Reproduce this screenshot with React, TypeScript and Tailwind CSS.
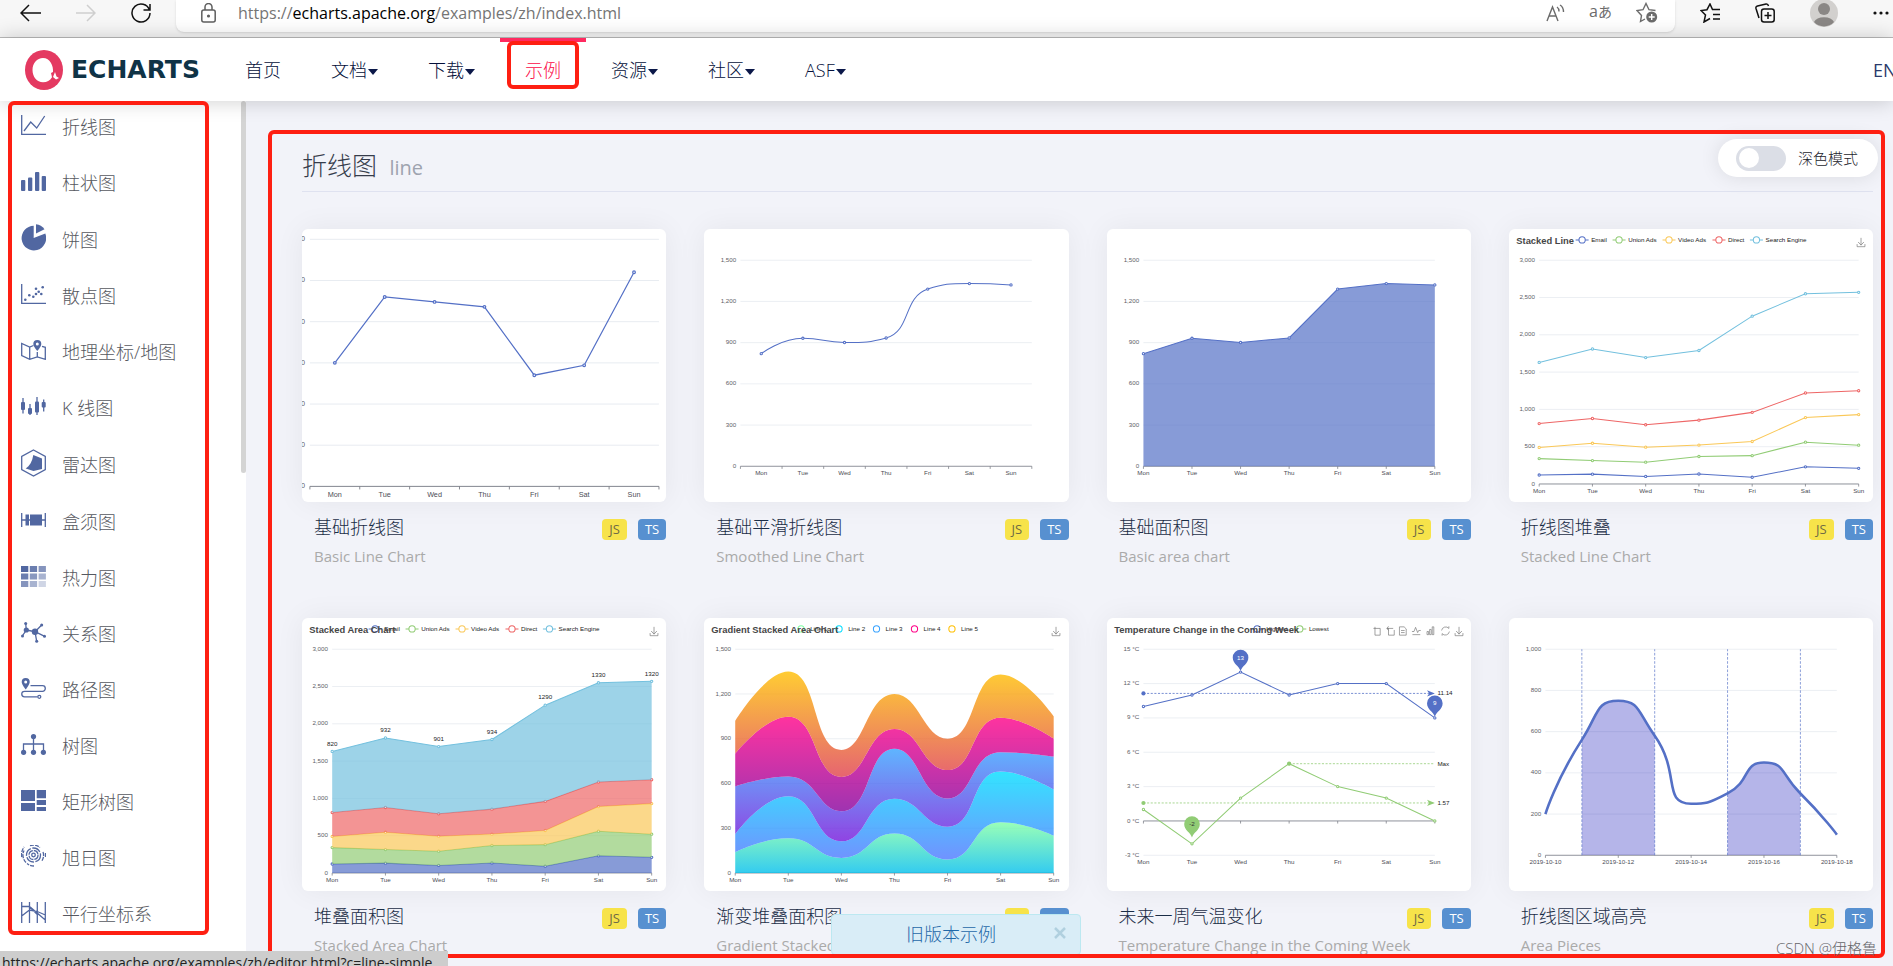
import type { ReactNode } from "react";

const DAYS = ["Mon", "Tue", "Wed", "Thu", "Fri", "Sat", "Sun"];

type Pt = [number, number];
type Box = { l: number; r: number; t: number; b: number };

const CENTER: Box = { l: 70, r: 630, t: 60, b: 456 };
const WIDE: Box = { l: 58, r: 672, t: 60, b: 490 };

const poly = (pts: Pt[]) => "M" + pts.map((p) => p.join(" ")).join("L");

const clamp = (v: number, a: number, b: number) => Math.max(Math.min(v, Math.max(a, b)), Math.min(a, b));

// Bezier smoothing: control points never leave the box between two neighbours.
function smoothPath(pts: Pt[], smooth = 0.5) {
  let d = `M${pts[0][0]} ${pts[0][1]}`;
  let [c0x, c0y] = pts[0];
  for (let i = 1; i < pts.length; i++) {
    const [px, py] = pts[i - 1];
    const [x, y] = pts[i];
    let c1x = x;
    let c1y = y;
    let n0x = x;
    let n0y = y;
    if (i < pts.length - 1) {
      const [nx, ny] = pts[i + 1];
      const prev = Math.hypot(x - px, y - py);
      const next = Math.hypot(nx - x, ny - y);
      const ratio = next / (next + prev);
      n0x = clamp(x + (nx - px) * smooth * ratio, x, nx);
      n0y = clamp(y + (ny - py) * smooth * ratio, y, ny);
      c1x = clamp(x - ((n0x - x) * prev) / next, px, x);
      c1y = clamp(y - ((n0y - y) * prev) / next, py, y);
      n0x = x + ((x - c1x) * next) / prev;
      n0y = y + ((y - c1y) * next) / prev;
    }
    d += `C${c0x} ${c0y} ${c1x} ${c1y} ${x} ${y}`;
    c0x = n0x;
    c0y = n0y;
  }
  return d;
}

const place = (values: number[], box: Box, max: number, min = 0, band = false): Pt[] =>
  values.map((v, i) => {
    const w = box.r - box.l;
    const x = band ? box.l + (w / values.length) * (i + 0.5) : box.l + (w / (values.length - 1)) * i;
    return [x, box.b - ((v - min) / (max - min)) * (box.b - box.t)];
  });

function Svg({ w = 700, h = 525, label, children }: { w?: number; h?: number; label: string; children: ReactNode }) {
  return (
    <svg viewBox={`0 0 ${w} ${h}`} role="img" aria-label={label} className="block h-full w-full font-['Liberation_Sans',sans-serif]">
      {children}
    </svg>
  );
}

function YGrid({ box, labels, labelX }: { box: Box; labels: string[]; labelX?: number }) {
  const step = (box.b - box.t) / (labels.length - 1);
  return (
    <g>
      {labels.map((l, i) => (
        <g key={i}>
          <line x1={box.l} x2={box.r} y1={box.t + step * i} y2={box.t + step * i} stroke="#e6eaf0" strokeWidth="1.5" />
          <text x={labelX ?? box.l - 8} y={box.t + step * i + 3} textAnchor="end" fontSize="12" fill="#5c5e66">
            {l}
          </text>
        </g>
      ))}
    </g>
  );
}

function XAxis({ box, labels = DAYS, band = false, y }: { box: Box; labels?: string[]; band?: boolean; y?: number }) {
  const w = box.r - box.l;
  const ticks = band ? labels.length : labels.length - 1;
  const axisY = y ?? box.b;
  return (
    <g>
      <path
        d={`M${box.l} ${axisY}H${box.r}` + Array.from({ length: ticks + 1 }, (_, i) => `M${box.l + (w / ticks) * i} ${axisY}v5`).join("")}
        stroke="#7d7f87"
        strokeWidth="1.5"
        fill="none"
      />
      {labels.map((l, i) => (
        <text key={l} x={box.l + (w / ticks) * (band ? i + 0.5 : i)} y={box.b + 17} textAnchor="middle" fontSize="12" fill="#4c4e56">
          {l}
        </text>
      ))}
    </g>
  );
}

function Dots({ pts, color }: { pts: Pt[]; color: string }) {
  return (
    <g fill="#fff" stroke={color} strokeWidth="2">
      {pts.map(([x, y]) => (
        <circle key={x} cx={x} cy={y} r="2.2" />
      ))}
    </g>
  );
}

type LegendItem = { name: string; x: number; color: string };

function Legend({ items, line = true }: { items: LegendItem[]; line?: boolean }) {
  return (
    <g>
      {items.map(({ name, x, color }) => (
        <g key={name}>
          {line && <path d={`M${x} 21h25`} stroke={color} strokeWidth="2" />}
          <circle cx={x + 12.5} cy="21" r="6" fill="#fff" stroke={color} strokeWidth="2" />
          <text x={x + 30} y="25" fontSize="12" fill="#222">
            {name}
          </text>
        </g>
      ))}
    </g>
  );
}

const ChartTitle = ({ children }: { children: string }) => (
  <text x="14" y="28" fontSize="18" fontWeight="bold" fill="#464646">
    {children}
  </text>
);

const Download = () => (
  <path d="M669 29v5h15v-5M676.500 17v14M671 25l5.500 6 5.500-6" fill="none" stroke="#777" strokeWidth="1.300" />
);

function BasicLine() {
  const box = { l: 13, r: 588, t: 17, b: 424 };
  const pts = place([150, 230, 224, 218, 135, 147, 260], box, 300, 0, true);
  return (
    <Svg w={600} h={450} label="Basic Line Chart">
      <YGrid box={box} labels={["300", "250", "200", "150", "100", "50", "0"]} labelX={5} />
      <XAxis box={box} band />
      <path d={poly(pts)} fill="none" stroke="#5470c6" strokeWidth="2" />
      <Dots pts={pts} color="#5470c6" />
    </Svg>
  );
}

const WEEK = [820, 932, 901, 934, 1290, 1330, 1320];
const TICKS_1500 = ["1,500", "1,200", "900", "600", "300", "0"];
const TICKS_3000 = ["3,000", "2,500", "2,000", "1,500", "1,000", "500", "0"];

function SmoothLine() {
  const pts = place(WEEK, CENTER, 1500, 0, true);
  return (
    <Svg label="Smoothed Line Chart">
      <YGrid box={CENTER} labels={TICKS_1500} />
      <XAxis box={CENTER} band />
      <path d={smoothPath(pts)} fill="none" stroke="#5470c6" strokeWidth="2" />
      <Dots pts={pts} color="#5470c6" />
    </Svg>
  );
}

function BasicArea() {
  const pts = place(WEEK, CENTER, 1500);
  return (
    <Svg label="Basic area chart">
      <YGrid box={CENTER} labels={TICKS_1500} />
      <XAxis box={CENTER} />
      <path d={`${poly(pts)}V${CENTER.b}H${CENTER.l}Z`} fill="#5470c6" fillOpacity="0.7" />
      <path d={poly(pts)} fill="none" stroke="#5470c6" strokeWidth="2" />
      <Dots pts={pts} color="#5470c6" />
    </Svg>
  );
}

const STACK = [
  { name: "Email", x: 128, color: "#5470c6", data: [120, 132, 101, 134, 90, 230, 210] },
  { name: "Union Ads", x: 199, color: "#91cc75", data: [220, 182, 191, 234, 290, 330, 310] },
  { name: "Video Ads", x: 295, color: "#fac858", data: [150, 232, 201, 154, 190, 330, 410] },
  { name: "Direct", x: 391, color: "#ee6666", data: [320, 332, 301, 334, 390, 330, 320] },
  { name: "Search Engine", x: 463, color: "#73c0de", data: WEEK },
];

// Running totals, one row for each stacked series.
const stackUp = (rows: number[][]) =>
  rows.map((_, i) => rows[0].map((_, k) => rows.slice(0, i + 1).reduce((sum, r) => sum + r[k], 0)));

const areaBetween = (top: Pt[], bottom: Pt[]) => `${poly(top)}L${poly([...bottom].reverse()).slice(1)}Z`;

function StackedLine({ area = false }: { area?: boolean }) {
  const lines = stackUp(STACK.map((s) => s.data)).map((row) => place(row, WIDE, 3000));
  const floor = place(Array(7).fill(0), WIDE, 3000);
  return (
    <Svg label={area ? "Stacked Area Chart" : "Stacked Line Chart"}>
      <Legend items={STACK} />
      <ChartTitle>{area ? "Stacked Area Chart" : "Stacked Line"}</ChartTitle>
      <Download />
      <YGrid box={WIDE} labels={TICKS_3000} />
      <XAxis box={WIDE} />
      {lines.map((pts, i) => (
        <g key={STACK[i].name}>
          {area && <path d={areaBetween(pts, lines[i - 1] ?? floor)} fill={STACK[i].color} fillOpacity="0.7" />}
          <path d={poly(pts)} fill="none" stroke={STACK[i].color} strokeWidth="2" />
          <Dots pts={pts} color={STACK[i].color} />
        </g>
      ))}
      {area &&
        lines[4].map(([x, y], i) => (
          <text key={x} x={x} y={y - 11} textAnchor="middle" fontSize="12" fill="#222">
            {WEEK[i]}
          </text>
        ))}
    </Svg>
  );
}

const GRADIENT = [
  { name: "Line 1", x: 174, color: "#80ffa5", from: "rgb(128,255,165)", to: "rgb(1,191,236)", data: [140, 232, 101, 264, 90, 340, 250] },
  { name: "Line 2", x: 247, color: "#00ddff", from: "rgb(0,221,255)", to: "rgb(77,119,255)", data: [120, 282, 111, 234, 220, 340, 310] },
  { name: "Line 3", x: 319, color: "#37a2ff", from: "rgb(55,162,255)", to: "rgb(116,21,219)", data: [320, 132, 201, 334, 190, 130, 220] },
  { name: "Line 4", x: 392, color: "#ff0087", from: "rgb(255,0,135)", to: "rgb(135,0,157)", data: [220, 402, 231, 134, 190, 230, 120] },
  { name: "Line 5", x: 464, color: "#ffbf00", from: "rgb(255,191,0)", to: "rgb(224,62,76)", data: [220, 302, 181, 234, 210, 290, 150] },
];

function GradientArea() {
  const box = { ...WIDE, l: 60 };
  const lines = stackUp(GRADIENT.map((s) => s.data)).map((row) => place(row, box, 1500));
  const floor = place(Array(7).fill(0), box, 1500);
  return (
    <Svg label="Gradient Stacked Area Chart">
      <defs>
        {GRADIENT.map((s, i) => (
          <linearGradient key={s.name} id={`grad-${i}`} x1="0" y1="0" x2="0" y2="1">
            <stop offset="0" stopColor={s.from} />
            <stop offset="1" stopColor={s.to} />
          </linearGradient>
        ))}
      </defs>
      <Legend items={GRADIENT} line={false} />
      <ChartTitle>Gradient Stacked Area Chart</ChartTitle>
      <Download />
      <YGrid box={box} labels={TICKS_1500} />
      <XAxis box={box} />
      {lines.map((pts, i) => {
        const back = [...(lines[i - 1] ?? floor)].reverse();
        return (
          <path key={GRADIENT[i].name} d={`${smoothPath(pts)}L${smoothPath(back).slice(1)}Z`} fill={`url(#grad-${i})`} fillOpacity="0.8" />
        );
      })}
    </Svg>
  );
}

function Pin({ x, y, color, text, dark = false }: { x: number; y: number; color: string; text: string; dark?: boolean }) {
  return (
    <g>
      <path d={`M${x} ${y + 26}C${x - 3} ${y + 16} ${x - 15} ${y + 12} ${x - 15} ${y}a15 15 0 0 1 30 0C${x + 15} ${y + 12} ${x + 3} ${y + 16} ${x} ${y + 26}Z`} fill={color} />
      <text x={x} y={y + 4} textAnchor="middle" fontSize="12" fill={dark ? "#333" : "#fff"}>
        {text}
      </text>
    </g>
  );
}

function Temperature() {
  const box = CENTER;
  const high = place([10, 11, 13, 11, 12, 12, 9], box, 15, -3);
  const low = place([1, -2, 2, 5, 3, 2, 0], box, 15, -3);
  const [, avgHigh] = place([11.14, 0], box, 15, -3)[0];
  const [, avgLow] = place([1.57, 0], box, 15, -3)[0];
  const marks = [
    { y: avgHigh, x: box.l, color: "#5470c6", text: "11.14", arrow: true },
    { y: low[3][1], x: low[3][0], color: "#91cc75", text: "Max", arrow: false },
    { y: avgLow, x: box.l, color: "#91cc75", text: "1.57", arrow: true },
  ];
  return (
    <Svg label="Temperature Change in the Coming Week">
      <Legend
        items={[
          { name: "Highest", x: 276, color: "#5470c6" },
          { name: "Lowest", x: 358, color: "#91cc75" },
        ]}
      />
      <ChartTitle>Temperature Change in the Coming Week</ChartTitle>
      <g fill="none" stroke="#777" strokeWidth="1.300">
        <path d="M512 20h13v13h-10v-16" />
        <path d="M538 20h3v13h11v-10M538 20h12M541 16l-3 4 3 4" />
        <path d="M562 17h9l4 4v12h-13zM565 24h7M565 28h7" />
        <path d="M587 32h15M586 26h4l3-8 4 10 2-4h4" />
        <path d="M615 32v-6h3v6zM620 32v-10h3v10zM625 32v-15h3v15z" />
        <path d="M643 24a8 8 0 0 1 14-4v-4M658 26a8 8 0 0 1-14 4v4" />
      </g>
      <Download />
      <YGrid box={box} labels={["15 °C", "12 °C", "9 °C", "6 °C", "3 °C", "0 °C", "-3 °C"]} />
      <XAxis box={box} y={390} />
      <path d={poly(high)} fill="none" stroke="#5470c6" strokeWidth="2" />
      <path d={poly(low)} fill="none" stroke="#91cc75" strokeWidth="2" />
      <Dots pts={high} color="#5470c6" />
      <Dots pts={low} color="#91cc75" />
      {marks.map((m) => (
        <g key={m.text}>
          <circle cx={m.x} cy={m.y} r="4" fill={m.color} />
          <path d={`M${m.x} ${m.y}H${box.r}`} stroke={m.color} strokeWidth="1.500" strokeDasharray="4 3" />
          {m.arrow && <path d={`M${box.r} ${m.y}l-15-6 4 6-4 6z`} fill={m.color} />}
          <text x={box.r + 5} y={m.y + 4} fontSize="12" fill="#222">
            {m.text}
          </text>
        </g>
      ))}
      <Pin x={high[2][0]} y={76} color="#5470c6" text="13" />
      <Pin x={high[6][0]} y={164} color="#5470c6" text="9" />
      <Pin x={low[1][0]} y={396} color="#91cc75" text="-2" dark />
    </Svg>
  );
}

function AreaPieces() {
  const box = CENTER;
  const line = smoothPath(place([200, 560, 750, 580, 250, 300, 450, 300, 100], box, 1000), 0.6);
  return (
    <Svg label="Area Pieces">
      <clipPath id="pieces">
        <rect x="140" y="60" width="140" height="396" />
        <rect x="420" y="60" width="140" height="396" />
      </clipPath>
      <YGrid box={box} labels={["1,000", "800", "600", "400", "200", "0"]} />
      <XAxis box={box} labels={["2019-10-10", "2019-10-12", "2019-10-14", "2019-10-16", "2019-10-18"]} />
      <path d={`${line}V${box.b}H${box.l}Z`} fill="rgb(0,0,180)" fillOpacity="0.29" clipPath="url(#pieces)" />
      <path d={line} fill="none" stroke="#5470c6" strokeWidth="5" />
      <path d="M140 456V60M280 456V60M420 456V60M560 456V60" stroke="#5470c6" strokeWidth="1.300" strokeDasharray="5 3" />
    </Svg>
  );
}

const EXAMPLES = [
  { zh: "基础折线图", en: "Basic Line Chart", chart: <BasicLine /> },
  { zh: "基础平滑折线图", en: "Smoothed Line Chart", chart: <SmoothLine /> },
  { zh: "基础面积图", en: "Basic area chart", chart: <BasicArea /> },
  { zh: "折线图堆叠", en: "Stacked Line Chart", chart: <StackedLine /> },
  { zh: "堆叠面积图", en: "Stacked Area Chart", chart: <StackedLine area /> },
  { zh: "渐变堆叠面积图", en: "Gradient Stacked Area Chart", chart: <GradientArea /> },
  { zh: "未来一周气温变化", en: "Temperature Change in the Coming Week", chart: <Temperature /> },
  { zh: "折线图区域高亮", en: "Area Pieces", chart: <AreaPieces /> },
];

const Icon = ({ h, children }: { h: number; children: ReactNode }) => (
  <svg width="25" height={h} viewBox={`0 0 25 ${h}`} fill="currentColor" aria-hidden="true" className="shrink-0">
    {children}
  </svg>
);

const stroke = { fill: "none", stroke: "currentColor", strokeWidth: 1.3 };

const MENU = [
  {
    name: "折线图",
    icon: (
      <Icon h={20}>
        <path d="M.7 0v19.300H25M3 16l6.700-9 6 6L23.700 1" {...stroke} />
      </Icon>
    ),
  },
  {
    name: "柱状图",
    icon: (
      <Icon h={19}>
        <rect y="8" width="4.300" height="11" rx="1" />
        <rect x="7" y="5.500" width="4.300" height="13.500" rx="1" />
        <rect x="14" width="4.300" height="19" rx="1" />
        <rect x="20.700" y="4" width="4.300" height="15" rx="1" />
      </Icon>
    ),
  },
  {
    name: "饼图",
    icon: (
      <Icon h={27}>
        <path d="M12.700 1.800A12.300 12.300 0 1 0 24.300 9.500L12.700 14z" />
        <path d="M15 .3v9.200l8.500-4.300A12 12 0 0 0 15 .3z" />
      </Icon>
    ),
  },
  {
    name: "散点图",
    icon: (
      <Icon h={20}>
        <path d="M.7 0v19.300H25" {...stroke} />
        {[[4.3, 15.7], [8.3, 11.3], [12.3, 12.7], [15, 10], [17.7, 7.7], [15, 4.7], [20.3, 10], [21.7, 3.3]].map(([x, y]) => (
          <circle key={`${x}-${y}`} cx={x} cy={y} r="1.300" />
        ))}
      </Icon>
    ),
  },
  {
    name: "地理坐标/地图",
    icon: (
      <Icon h={20}>
        <path d="M12.500 5.500L8.700 7 .7 3.500v12l8 3.800 7.600-2.300 8 2.300v-12L21 6.300M8.700 7v12.300M16.300 12v5" {...stroke} />
        <path fillRule="evenodd" d="M16.300 0a4 4 0 0 0-4 4c0 2.500 4 7 4 7s4-4.500 4-7a4 4 0 0 0-4-4zm0 2.500a1.500 1.500 0 1 1 0 3 1.500 1.500 0 0 1 0-3z" />
      </Icon>
    ),
  },
  {
    name: "K 线图",
    icon: (
      <Icon h={18}>
        <path d="M2 1v15.500M9 7v11M16 0v18M22.700 2.500v12" {...stroke} />
        <rect y="5" width="4" height="8" rx="1" />
        <rect x="7" y="11" width="4" height="6" rx="1" />
        <rect x="14" y="4.500" width="4" height="11" rx="1" />
        <rect x="20.700" y="5" width="4" height="5.500" rx="1" />
      </Icon>
    ),
  },
  {
    name: "雷达图",
    icon: (
      <Icon h={28}>
        <path d="M12.500 1l11.800 6.500v13L12.500 27 .7 20.500v-13z" {...stroke} />
        <path d="M12.300 6L21 9.500V20l-8.500 2-7.800-2.500c4-2.500 6.600-7 7.600-13.500z" />
      </Icon>
    ),
  },
  {
    name: "盒须图",
    icon: (
      <Icon h={15}>
        <path d="M.7 0v14M24.300 0v14M0 7h25" {...stroke} />
        <rect x="4.500" y="1.500" width="3.500" height="11" />
        <rect x="9" y="1.500" width="12" height="11" />
      </Icon>
    ),
  },
  {
    name: "热力图",
    icon: (
      <Icon h={21}>
        {[1, 0.85, 0.7, 0.85, 0.68, 0.5, 0.7, 0.5, 0.28].map((o, i) => (
          <rect key={i} x={(i % 3) * 8.8} y={Math.floor(i / 3) * 7.5} width="7.300" height="6" opacity={o} />
        ))}
      </Icon>
    ),
  },
  {
    name: "关系图",
    icon: (
      <Icon h={21}>
        <path d="M4.700 1.500l.6 6.500-4 6M5.300 8l8.700 1.700 6.700-6.700M14 9.700l9.700 4.600M14 9.700l1.700 9.600" {...stroke} />
        {[[4.7, 1.5, 1.5], [5.3, 8, 2.6], [1.5, 14, 1.5], [14, 9.7, 3.2], [20.7, 3, 1.5], [23.5, 14.3, 1.5], [15.7, 19.3, 1.5]].map(([x, y, r]) => (
          <circle key={`${x}-${y}`} cx={x} cy={y} r={r} />
        ))}
      </Icon>
    ),
  },
  {
    name: "路径图",
    icon: (
      <Icon h={21}>
        <path d="M9.500 7.700H21.500a2.800 2.800 0 0 1 0 5.600H3.500a2.700 2.700 0 0 0 0 5.500H16.500" {...stroke} />
        <circle cx="18.300" cy="18.800" r="1.500" {...stroke} />
        <path fillRule="evenodd" d="M4.700 0a4 4 0 0 0-4 4c0 2.700 4 7.500 4 7.500s4-4.800 4-7.500a4 4 0 0 0-4-4zm0 2.500a1.500 1.500 0 1 1 0 3 1.500 1.500 0 0 1 0-3z" />
      </Icon>
    ),
  },
  {
    name: "树图",
    icon: (
      <Icon h={21}>
        <path d="M2.500 18v-8h20v8M12.500 3v15" {...stroke} />
        {[[12.5, 2.6], [2.6, 18.3], [12.5, 18.3], [22.4, 18.3]].map(([x, y]) => (
          <circle key={`${x}-${y}`} cx={x} cy={y} r="2.600" />
        ))}
      </Icon>
    ),
  },
  {
    name: "矩形树图",
    icon: (
      <Icon h={21}>
        <path d="M0 0h14v11H0zM0 13h14v8H0zM15.700 0H25v8.300h-9.300zM15.700 10H25v5h-9.300zM15.700 17H25v4h-9.300z" />
      </Icon>
    ),
  },
  {
    name: "旭日图",
    icon: (
      <Icon h={22}>
        <circle cx="12.500" cy="10" r="1.800" {...stroke} />
        <circle cx="12.500" cy="10" r="4.500" {...stroke} strokeDasharray="6 1" />
        <circle cx="12.500" cy="10" r="7" {...stroke} strokeDasharray="9 1.500" />
        <path d="M5 17.500A10.500 10.500 0 0 1 3 5.500M9 .6a10 10 0 0 1 10 2M22 7a10 10 0 0 1-1.500 9.500M13 21a11 11 0 0 1-7-2.500M.7 12a12 12 0 0 1 2.500-10M24.500 8v5" {...stroke} strokeDasharray="4 1" />
      </Icon>
    ),
  },
  {
    name: "平行坐标系",
    icon: (
      <Icon h={21}>
        <path d="M.7 0v21M8.500 0v21M16.300 0v21M24.300 0v21M.7 4.500h7.800L24.300 18M.7 14l7.800-6 7.800 1.500 8 3.500M8.500 4.500l7.800 8" {...stroke} />
      </Icon>
    ),
  },
];

const NAV = [
  { name: "首页" },
  { name: "文档", caret: true },
  { name: "下载", caret: true },
  { name: "示例", active: true },
  { name: "资源", caret: true },
  { name: "社区", caret: true },
  { name: "ASF", caret: true },
];

function Toolbar() {
  return (
    <div className="flex h-[38px] shrink-0 items-start overflow-hidden border-b border-[#bcbcbc] bg-[#f7f7f7]">
      <div className="flex h-[25px] items-center gap-[35px] pr-[25px] pl-5">
        <button aria-label="Back">
          <svg width="21" height="18" viewBox="0 0 21 18" fill="none" stroke="#111" strokeWidth="1.500" className="block">
            <path d="M21 9H1M9 1L1 9l8 8" />
          </svg>
        </button>
        <button aria-label="Forward" disabled>
          <svg width="20" height="18" viewBox="0 0 20 18" fill="none" stroke="#cfcfcf" strokeWidth="1.500" className="block">
            <path d="M0 9h19M11 1l8 8-8 8" />
          </svg>
        </button>
        <button aria-label="Refresh">
          <svg width="20" height="20" viewBox="0 0 20 20" fill="none" stroke="#111" strokeWidth="1.500" className="block">
            <path d="M18.500 7A9 9 0 1 0 19 10M19 1v6h-6.500" />
          </svg>
        </button>
      </div>
      <div className="flex h-8 flex-1 items-center rounded-b-lg bg-white pr-[17px] pb-[7px] pl-[25px] shadow-sm">
        <svg width="15" height="20" viewBox="0 0 15 20" fill="none" stroke="#5f5f5f" strokeWidth="1.500" aria-hidden="true">
          <rect x=".8" y="7" width="13.400" height="12" rx="2" />
          <path d="M4 7V4a3.500 3.500 0 0 1 7 0v3" />
          <circle cx="7.500" cy="13" r=".8" fill="#5f5f5f" />
        </svg>
        <p className="ml-[22px] flex-1 text-base leading-6 text-[#757575]">
          https://<span className="text-black">echarts.apache.org</span>/examples/zh/index.html
        </p>
        <div className="flex items-center gap-6 text-[#6b6b6b]">
          <button aria-label="Read aloud">
            <svg width="19" height="18" viewBox="0 0 19 18" fill="none" stroke="currentColor" strokeWidth="1.400" className="block">
              <path d="M1 17L6.500 3 12 17M3 12h7M11 3c1.500 1 2 2.500 2 4.500M14 1c2.500 1.500 3.500 4 3.500 7" />
            </svg>
          </button>
          <button aria-label="Translate" className="flex items-baseline pb-1 leading-5">
            <span className="text-base">a</span>
            <span className="text-sm">あ</span>
          </button>
          <button aria-label="Add to favorites">
            <svg width="22" height="21" viewBox="0 0 22 21" fill="none" stroke="currentColor" strokeWidth="1.400" className="block">
              <path d="M9 17l-4.500 2.500 1-6L1 8.500l6-.8L10 1.500l3 6.200 6.500.8" />
              <circle cx="15.700" cy="15" r="5.500" fill="currentColor" stroke="none" />
              <path d="M15.700 12v6M12.700 15h6" stroke="#fff" />
            </svg>
          </button>
        </div>
      </div>
      <div className="flex h-[25px] items-center gap-[35px] pr-1 pl-[25px]">
        <button aria-label="Favorites">
          <svg width="20" height="20" viewBox="0 0 20 20" fill="none" stroke="#111" strokeWidth="1.500" className="block">
            <path d="M10 15.500l-6 3.500 1.500-7L1 7.500l6-.8L10 1l2.500 5.500H20M13 11.500h7M13 16h7" />
          </svg>
        </button>
        <button aria-label="Collections">
          <svg width="20" height="20" viewBox="0 0 20 20" fill="none" stroke="#111" strokeWidth="1.500" className="block">
            <rect x="6.500" y="6" width="12.700" height="13" rx="2.500" />
            <path d="M13 9v7M9.500 12.500h7M4 15L1 5.500Q.5 3.500 2.500 3L11 1q2-.3 2.500 2" />
          </svg>
        </button>
        <button aria-label="Profile">
          <svg width="28" height="28" viewBox="0 0 28 28" className="block">
            <circle cx="14" cy="14" r="14" fill="#d2d0ce" />
            <circle cx="14" cy="10" r="6" fill="#8a8785" />
            <path d="M4 23a10.500 7 0 0 1 20 0 13.500 13.500 0 0 1-20 0z" fill="#8a8785" />
          </svg>
        </button>
        <button aria-label="Settings and more">
          <svg width="16" height="4" viewBox="0 0 16 4" fill="#111" className="block">
            <circle cx="2" cy="2" r="1.600" />
            <circle cx="8" cy="2" r="1.600" />
            <circle cx="14" cy="2" r="1.600" />
          </svg>
        </button>
      </div>
    </div>
  );
}

function Header() {
  return (
    <header className="relative z-10 flex h-[63px] shrink-0 bg-white pl-[25px] shadow-[0_0_20px_rgba(0,0,0,0.2)]">
      <a href="#home" className="flex w-[195px] items-center gap-2" aria-label="Apache ECharts">
        <svg width="38" height="40" viewBox="0 0 38 40" aria-hidden="true">
          <ellipse cx="19" cy="20" rx="19" ry="20" fill="#e43961" />
          <path d="M18 8C12 8 7.500 13 7.500 20S12 32.300 18 32.300c4 0 7-1.800 9-5L26 23l2-1c.7-6-3-14-10-14z" fill="#fff" />
          <path d="M30 22l1.500 4.500 2.500 1.500-3 1.500-3-2.500z" fill="#fff" />
        </svg>
        <span className="font-['DejaVu_Sans',sans-serif] text-[25px] font-bold text-[#0f3346]">ECHARTS</span>
      </a>
      <nav className="flex">
        {NAV.map((item) => (
          <a
            key={item.name}
            href={`#${item.name}`}
            className={
              item.active
                ? "relative flex items-center border-t-4 border-[#ff2a60] px-[25px] pb-1 text-lg font-light text-[#fb0a47]"
                : "flex items-center px-[25px] text-lg font-light text-[#040f3a]"
            }
          >
            {item.name}
            {item.caret && <span className="mt-1 ml-px border-x-[5px] border-t-[6px] border-x-transparent border-t-[#0b1849]" />}
            {item.active && <span className="absolute inset-x-[7px] -top-px h-12 rounded-md border-4 border-[#fe1f12]" />}
          </a>
        ))}
      </nav>
      <a href="#en" className="ml-auto flex w-5 items-center overflow-hidden text-lg text-[#2b3a6b]">
        EN
      </a>
    </header>
  );
}

function Sidebar() {
  return (
    <aside className="relative w-[246px] shrink-0 bg-white">
      <ul className="-mt-1">
        {MENU.map((item) => (
          <li key={item.name}>
            <a href={`#${item.name}`} className="flex items-center gap-4 py-[15px] pl-[21px] text-[#5167a1]">
              {item.icon}
              <span className="pt-1 text-lg leading-[22px] font-light text-[#565860]">{item.name}</span>
            </a>
          </li>
        ))}
      </ul>
      <div className="absolute top-0 right-0 h-[372px] w-[5px] rounded-full bg-[#d4d4d4]" />
      <div className="absolute top-0 left-2 z-20 h-[834px] w-[201px] rounded-md border-4 border-[#fe1f12]" />
    </aside>
  );
}

function DarkSwitch() {
  return (
    <label className="absolute top-[38px] right-[15px] flex h-[38px] w-40 items-center gap-3 rounded-full bg-white pl-[18px] shadow-[0_0_20px_rgba(0,0,0,0.1)]">
      <input type="checkbox" className="peer sr-only" />
      <span className="flex h-[25px] w-[50px] items-center rounded-full bg-[#dbdee6] px-[3px] peer-checked:justify-end">
        <span className="size-5 rounded-full bg-white" />
      </span>
      <span className="text-[15px] font-light text-[#1c242c]">深色模式</span>
    </label>
  );
}

export default function App() {
  return (
    <div className="relative flex h-screen flex-col overflow-hidden bg-[#f2f3f9] font-['Open_Sans','Noto_Sans_CJK_SC',sans-serif]">
      <Toolbar />
      <Header />
      <div className="flex min-h-0 flex-1">
        <Sidebar />
        <main className="relative min-w-0 flex-1 pt-[45px] pr-5 pl-14">
          <h1 className="border-b border-[#dfe2f0] pb-[7px] text-[25px] leading-[38px] font-light text-[#363c4b]">
            折线图 <span className="ml-1.5 text-xl font-normal text-[#9ea3af]">line</span>
          </h1>
          <div className="mt-[37px] grid grid-cols-4 gap-x-[38px] gap-y-[51px]">
            {EXAMPLES.map((ex) => (
              <a key={ex.en} href={`#${ex.en}`} className="block min-w-0">
                <div className="aspect-4/3 overflow-hidden rounded-md bg-white shadow-[0_0_30px_rgba(0,0,0,0.06)]">{ex.chart}</div>
                <div className="flex items-end pt-[13px]">
                  <span className="flex-1 pb-px pl-3 text-lg leading-6 font-light text-[#1a2d46]">{ex.zh}</span>
                  <span className="rounded-sm bg-[#f7e34a] px-[7px] text-[13px] leading-[21px] text-[#6f6a45]">JS</span>
                  <span className="ml-[11px] rounded-sm bg-[#5790d0] px-[7px] text-[13px] leading-[21px] text-white">TS</span>
                </div>
                <div className="mt-[5px] truncate pl-3 text-[15px] leading-[22px] text-[#aaa]">{ex.en}</div>
              </a>
            ))}
          </div>
          <DarkSwitch />
          <div className="absolute bottom-[11px] left-[585px] flex h-[41px] w-[250px] items-center rounded-sm border border-[#bce8f1] bg-[#d9edf7]">
            <a href="#legacy" className="flex-1 pb-0.5 pl-4 text-center text-lg font-light text-[#1f68a8]">
              旧版本示例
            </a>
            <button aria-label="关闭" className="mr-3.5 mb-1 text-[#b0d0df]">
              <svg width="12" height="12" viewBox="0 0 12 12" stroke="currentColor" strokeWidth="2.500" className="block">
                <path d="M1 1l10 10M11 1L1 11" />
              </svg>
            </button>
          </div>
          <div className="pointer-events-none absolute top-[29px] right-2 bottom-2 left-[22px] rounded-md border-4 border-[#fe1f12]" />
          <p className="absolute right-4 bottom-1.5 text-[15px] leading-6 font-light text-[#66666a]">CSDN @伊格鲁</p>
        </main>
      </div>
      <p className="absolute bottom-0 left-0 z-30 h-[15px] overflow-hidden bg-[#cdcdcd] pr-4 pl-0.5 text-sm leading-6 text-[#222]">
        https://echarts.apache.org/examples/zh/editor.html?c=line-simple
      </p>
    </div>
  );
}
